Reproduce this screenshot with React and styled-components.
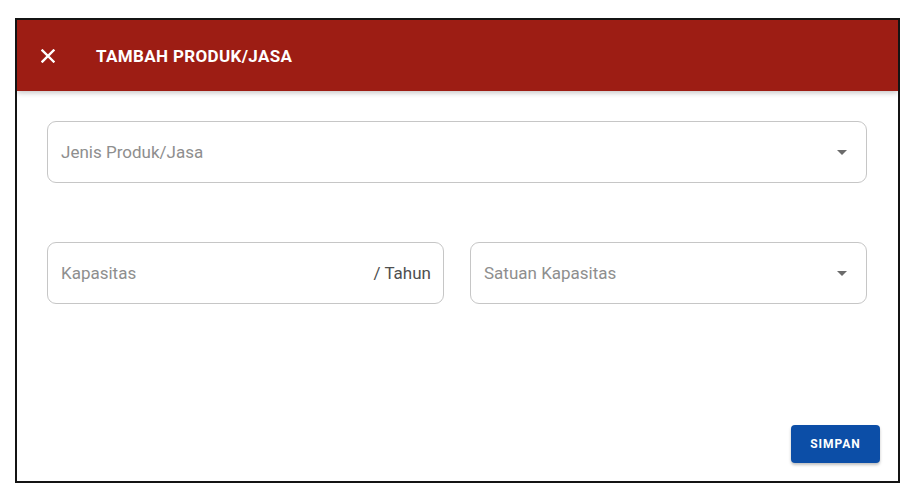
import styled, { createGlobalStyle } from 'styled-components';

const GlobalStyle = createGlobalStyle`
  html, body {
    margin: 0;
    padding: 0;
    background: #ffffff;
    font-family: Roboto, "Liberation Sans", Arial, sans-serif;
  }
`;

const StyledPage = styled.div`
  padding: 18px 0 0 15px;
`;

const StyledDialog = styled.div`
  width: 881px;
  height: 461px;
  border: 2px solid #141414;
  background: #ffffff;
  display: flex;
  flex-direction: column;
  overflow: hidden;
`;

const StyledHeader = styled.div`
  height: 71px;
  flex-shrink: 0;
  background: #9d1d14;
  display: flex;
  align-items: center;
  padding-left: 23px;
  box-shadow: 0 2px 5px rgba(0, 0, 0, 0.22);
  position: relative;
  z-index: 1;
`;

const StyledCloseButton = styled.button`
  width: 16px;
  height: 16px;
  padding: 0;
  border: none;
  background: none;
  display: flex;
  align-items: center;
  justify-content: center;
  cursor: pointer;
  margin-right: 40px;
`;

const StyledTitle = styled.div`
  color: #ffffff;
  font-size: 17px;
  font-weight: 700;
  letter-spacing: 0.35px;
`;

const StyledBody = styled.div`
  flex: 1;
  display: flex;
  flex-direction: column;
  padding: 30px 31px 18px 30px;
`;

const StyledRow = styled.div`
  display: grid;
  grid-template-columns: ${({ $cols }) => $cols};
  gap: 26px;
  margin-bottom: ${({ $gap }) => $gap}px;
`;

const StyledField = styled.div`
  height: 62px;
  border: 1px solid #c6c6c6;
  border-radius: 9px;
  display: flex;
  align-items: center;
  padding: 0 12px 0 13px;
  box-sizing: border-box;
`;

const StyledPlaceholder = styled.div`
  flex: 1;
  color: #8e8e8e;
  font-size: 17px;
`;

const StyledSuffix = styled.div`
  color: #4f4f4f;
  font-size: 17px;
`;

const StyledArrow = styled.div`
  width: 0;
  height: 0;
  border-left: 5px solid transparent;
  border-right: 5px solid transparent;
  border-top: 5px solid #6b6b6b;
  margin-right: 7px;
`;

const StyledFooter = styled.div`
  margin-top: auto;
  margin-right: -13px;
  display: flex;
  justify-content: flex-end;
`;

const StyledSaveButton = styled.button`
  width: 89px;
  height: 38px;
  border: none;
  border-radius: 4px;
  background: #0c4ea7;
  color: #ffffff;
  font-family: Roboto, "Liberation Sans", Arial, sans-serif;
  font-size: 12px;
  font-weight: 700;
  letter-spacing: 1px;
  box-shadow: 0 2px 3px rgba(0, 0, 0, 0.25);
  cursor: pointer;
`;

function Field({ label, suffix, select }) {
  return (
    <StyledField>
      <StyledPlaceholder>{label}</StyledPlaceholder>
      {suffix && <StyledSuffix>{suffix}</StyledSuffix>}
      {select && <StyledArrow />}
    </StyledField>
  );
}

function App() {
  return (
    <StyledPage>
      <GlobalStyle />
      <StyledDialog>
        <StyledHeader>
          <StyledCloseButton aria-label="close">
            <svg width="14" height="14" viewBox="0 0 14 14">
              <path d="M1.5 1.5 L12.5 12.5 M12.5 1.5 L1.5 12.5" stroke="#ffffff" strokeWidth="2.4" strokeLinecap="square" />
            </svg>
          </StyledCloseButton>
          <StyledTitle>TAMBAH PRODUK/JASA</StyledTitle>
        </StyledHeader>
        <StyledBody>
          <StyledRow $cols="1fr" $gap={59}>
            <Field label="Jenis Produk/Jasa" select />
          </StyledRow>
          <StyledRow $cols="1fr 1fr" $gap={0}>
            <Field label="Kapasitas" suffix="/ Tahun" />
            <Field label="Satuan Kapasitas" select />
          </StyledRow>
          <StyledFooter>
            <StyledSaveButton>SIMPAN</StyledSaveButton>
          </StyledFooter>
        </StyledBody>
      </StyledDialog>
    </StyledPage>
  );
}

export default App;
